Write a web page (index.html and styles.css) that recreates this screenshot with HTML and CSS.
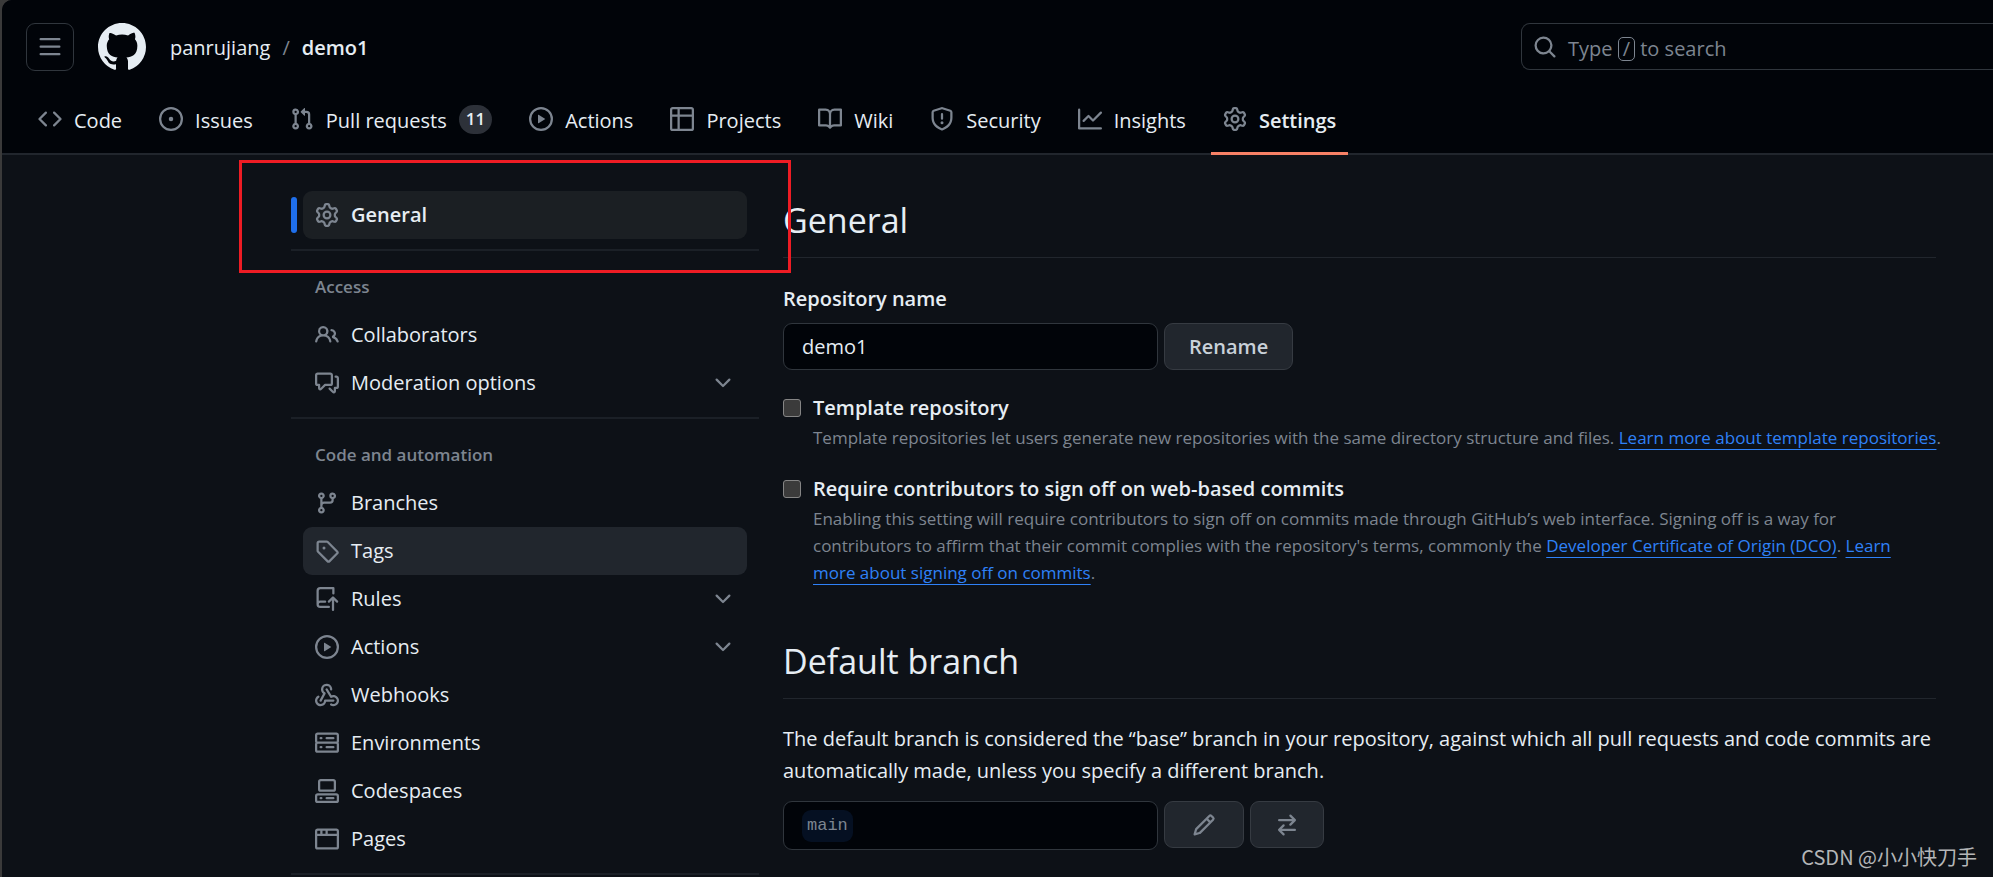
FILE: index.html
```html
<!DOCTYPE html>
<html lang="en">
<head>
<meta charset="utf-8">
<title>Settings · panrujiang/demo1</title>
<link rel="stylesheet" href="styles.css">
</head>
<body>
<svg class="sprite" aria-hidden="true">
  <symbol id="i-bars" viewBox="0 0 16 16"><path d="M1 2.75A.75.75 0 0 1 1.75 2h12.5a.75.75 0 0 1 0 1.5H1.75A.75.75 0 0 1 1 2.75Zm0 5A.75.75 0 0 1 1.75 7h12.5a.75.75 0 0 1 0 1.5H1.75A.75.75 0 0 1 1 7.75ZM1.75 12h12.5a.75.75 0 0 1 0 1.5H1.75a.75.75 0 0 1 0-1.5Z"/></symbol>
  <symbol id="i-mark" viewBox="0 0 16 16"><path d="M8 0c4.42 0 8 3.58 8 8a8.013 8.013 0 0 1-5.45 7.59c-.4.08-.55-.17-.55-.38 0-.27.01-1.13.01-2.2 0-.75-.25-1.23-.54-1.48 1.78-.2 3.65-.88 3.65-3.95 0-.88-.31-1.59-.82-2.15.08-.2.36-1.02-.08-2.12 0 0-.67-.22-2.2.82-.64-.18-1.32-.27-2-.27-.68 0-1.36.09-2 .27-1.53-1.03-2.2-.82-2.2-.82-.44 1.1-.16 1.92-.08 2.12-.51.56-.82 1.28-.82 2.15 0 3.06 1.86 3.75 3.64 3.95-.23.2-.44.55-.51 1.07-.46.21-1.61.55-2.33-.66-.15-.24-.6-.83-1.23-.82-.67.01-.27.38.01.53.34.19.73.9.82 1.13.16.45.68 1.31 2.69.94 0 .67.01 1.3.01 1.49 0 .21-.15.45-.55.38A7.995 7.995 0 0 1 0 8c0-4.42 3.58-8 8-8Z"/></symbol>
  <symbol id="i-search" viewBox="0 0 16 16"><path d="M10.68 11.74a6 6 0 0 1-7.922-8.982 6 6 0 0 1 8.982 7.922l3.04 3.04a.749.749 0 0 1-.326 1.275.749.749 0 0 1-.734-.215ZM11.5 7a4.499 4.499 0 1 0-8.997 0A4.499 4.499 0 0 0 11.5 7Z"/></symbol>
  <symbol id="i-code" viewBox="0 0 16 16"><path d="m11.28 3.22 4.25 4.25a.75.75 0 0 1 0 1.06l-4.25 4.25a.749.749 0 0 1-1.275-.326.749.749 0 0 1 .215-.734L13.94 8l-3.72-3.72a.749.749 0 0 1 .326-1.275.749.749 0 0 1 .734.215Zm-6.56 0a.751.751 0 0 1 1.042.018.751.751 0 0 1 .018 1.042L2.06 8l3.72 3.72a.749.749 0 0 1-.326 1.275.749.749 0 0 1-.734-.215L.47 8.53a.75.75 0 0 1 0-1.06Z"/></symbol>
  <symbol id="i-issue" viewBox="0 0 16 16"><path d="M8 9.5a1.5 1.5 0 1 0 0-3 1.5 1.5 0 0 0 0 3Z"/><path d="M8 0a8 8 0 1 1 0 16A8 8 0 0 1 8 0ZM1.5 8a6.5 6.5 0 1 0 13 0 6.5 6.5 0 0 0-13 0Z"/></symbol>
  <symbol id="i-pull" viewBox="0 0 16 16"><path d="M1.5 3.25a2.25 2.25 0 1 1 3 2.122v5.256a2.251 2.251 0 1 1-1.5 0V5.372A2.25 2.25 0 0 1 1.5 3.25Zm5.677-.177L9.573.677A.25.25 0 0 1 10 .854V2.5h1A2.5 2.5 0 0 1 13.5 5v5.628a2.251 2.251 0 1 1-1.5 0V5a1 1 0 0 0-1-1h-1v1.646a.25.25 0 0 1-.427.177L7.177 3.427a.25.25 0 0 1 0-.354ZM3.75 2.5a.75.75 0 1 0 0 1.5.75.75 0 0 0 0-1.5Zm0 9.5a.75.75 0 1 0 0 1.5.75.75 0 0 0 0-1.5Zm8.25.75a.75.75 0 1 0 1.5 0 .75.75 0 0 0-1.5 0Z"/></symbol>
  <symbol id="i-play" viewBox="0 0 16 16"><path d="M8 0a8 8 0 1 1 0 16A8 8 0 0 1 8 0ZM1.5 8a6.5 6.5 0 1 0 13 0 6.5 6.5 0 0 0-13 0Zm4.879-2.773 4.264 2.559a.25.25 0 0 1 0 .428l-4.264 2.559A.25.25 0 0 1 6 10.559V5.442a.25.25 0 0 1 .379-.215Z"/></symbol>
  <symbol id="i-table" viewBox="0 0 16 16"><path d="M0 1.75C0 .784.784 0 1.75 0h12.5C15.216 0 16 .784 16 1.75v12.5A1.75 1.75 0 0 1 14.25 16H1.75A1.75 1.75 0 0 1 0 14.25ZM6.5 6.5v8h7.75a.25.25 0 0 0 .25-.25V6.5Zm8-1.5V1.75a.25.25 0 0 0-.25-.25H6.5V5Zm-13 1.5v7.75c0 .138.112.25.25.25H5v-8ZM5 5V1.5H1.75a.25.25 0 0 0-.25.25V5Z"/></symbol>
  <symbol id="i-book" viewBox="0 0 16 16"><path d="M0 1.75A.75.75 0 0 1 .75 1h4.253c1.227 0 2.317.59 3 1.501A3.743 3.743 0 0 1 11.006 1h4.245a.75.75 0 0 1 .75.75v10.5a.75.75 0 0 1-.75.75h-4.507a2.25 2.25 0 0 0-1.591.659l-.622.621a.75.75 0 0 1-1.06 0l-.622-.621A2.25 2.25 0 0 0 5.258 13H.75a.75.75 0 0 1-.75-.75Zm7.251 10.324.004-5.073-.002-2.253A2.25 2.25 0 0 0 5.003 2.5H1.5v9h3.757a3.75 3.75 0 0 1 1.994.574ZM8.755 4.75l-.004 7.322a3.752 3.752 0 0 1 1.992-.572H14.5v-9h-3.495a2.25 2.25 0 0 0-2.25 2.25Z"/></symbol>
  <symbol id="i-shield" viewBox="0 0 16 16"><path d="M7.467.133a1.748 1.748 0 0 1 1.066 0l5.25 1.68A1.75 1.75 0 0 1 15 3.48V7c0 1.566-.32 3.182-1.303 4.682-.983 1.498-2.585 2.813-5.032 3.855a1.697 1.697 0 0 1-1.33 0c-2.447-1.042-4.049-2.357-5.032-3.855C1.32 10.182 1 8.566 1 7V3.48a1.755 1.755 0 0 1 1.217-1.667Zm.61 1.429a.25.25 0 0 0-.153 0l-5.25 1.68a.25.25 0 0 0-.174.238V7c0 1.358.275 2.666 1.057 3.86.784 1.194 2.121 2.34 4.366 3.297a.196.196 0 0 0 .154 0c2.245-.956 3.582-2.104 4.366-3.298C13.225 9.666 13.5 8.36 13.5 7V3.48a.251.251 0 0 0-.174-.237l-5.25-1.68ZM8.75 4.75v3a.75.75 0 0 1-1.5 0v-3a.75.75 0 0 1 1.5 0ZM9 10.5a1 1 0 1 1-2 0 1 1 0 0 1 2 0Z"/></symbol>
  <symbol id="i-graph" viewBox="0 0 16 16"><path d="M1.5 1.75V13.5h13.75a.75.75 0 0 1 0 1.5H.75a.75.75 0 0 1-.75-.75V1.75a.75.75 0 0 1 1.5 0Zm14.28 2.53-5.25 5.25a.75.75 0 0 1-1.06 0L7 7.06 4.28 9.78a.751.751 0 0 1-1.042-.018.751.751 0 0 1-.018-1.042l3.25-3.25a.75.75 0 0 1 1.06 0L10 7.94l4.72-4.72a.751.751 0 0 1 1.042.018.751.751 0 0 1 .018 1.042Z"/></symbol>
  <symbol id="i-gear" viewBox="0 0 16 16"><path d="M8 0a8.2 8.2 0 0 1 .701.031C9.444.095 9.99.645 10.16 1.29l.288 1.107c.018.066.079.158.212.224.231.114.454.243.668.386.123.082.233.09.299.071l1.103-.303c.644-.176 1.392.021 1.82.63.27.385.506.792.704 1.218.315.675.111 1.422-.364 1.891l-.814.806c-.049.048-.098.147-.088.294.016.257.016.515 0 .772-.01.147.038.246.088.294l.814.806c.475.469.679 1.216.364 1.891a7.977 7.977 0 0 1-.704 1.217c-.428.61-1.176.807-1.82.63l-1.102-.302c-.067-.019-.177-.011-.3.071a5.909 5.909 0 0 1-.668.386c-.133.066-.194.158-.211.224l-.29 1.106c-.168.646-.715 1.196-1.458 1.26a8.006 8.006 0 0 1-1.402 0c-.743-.064-1.289-.614-1.458-1.26l-.289-1.106c-.018-.066-.079-.158-.212-.224a5.738 5.738 0 0 1-.668-.386c-.123-.082-.233-.09-.299-.071l-1.103.303c-.644.176-1.392-.021-1.82-.63a8.12 8.12 0 0 1-.704-1.218c-.315-.675-.111-1.422.363-1.891l.815-.806c.05-.048.098-.147.088-.294a6.214 6.214 0 0 1 0-.772c.01-.147-.038-.246-.088-.294l-.815-.806C.635 6.045.431 5.298.746 4.623a7.92 7.92 0 0 1 .704-1.217c.428-.61 1.176-.807 1.82-.63l1.102.302c.067.019.177.011.3-.071.214-.143.437-.272.668-.386.133-.066.194-.158.211-.224l.29-1.106C6.009.645 6.556.095 7.299.03 7.53.01 7.764 0 8 0Zm-.571 1.525c-.036.003-.108.036-.137.146l-.289 1.105c-.147.561-.549.967-.998 1.189-.173.086-.34.183-.5.29-.417.278-.97.423-1.529.27l-1.103-.303c-.109-.03-.175.016-.195.045-.22.312-.412.644-.573.99-.014.031-.021.11.059.19l.815.806c.411.406.562.957.53 1.456a4.709 4.709 0 0 0 0 .582c.032.499-.119 1.05-.53 1.456l-.815.806c-.081.08-.073.159-.059.19.162.346.353.677.573.989.02.03.085.076.195.046l1.102-.303c.56-.153 1.113-.008 1.53.27.161.107.328.204.501.29.447.222.85.629.997 1.189l.289 1.105c.029.109.101.143.137.146a6.6 6.6 0 0 0 1.142 0c.036-.003.108-.036.137-.146l.289-1.105c.147-.561.549-.967.998-1.189.173-.086.34-.183.5-.29.417-.278.97-.423 1.529-.27l1.103.303c.109.029.175-.016.195-.045.22-.313.411-.644.573-.99.014-.031.021-.11-.059-.19l-.815-.806c-.411-.406-.562-.957-.53-1.456a4.709 4.709 0 0 0 0-.582c-.032-.499.119-1.05.53-1.456l.815-.806c.081-.08.073-.159.059-.19a6.464 6.464 0 0 0-.573-.989c-.02-.03-.085-.076-.195-.046l-1.102.303c-.56.153-1.113.008-1.53-.27a4.44 4.44 0 0 0-.501-.29c-.447-.222-.85-.629-.997-1.189l-.289-1.105c-.029-.11-.101-.143-.137-.146a6.6 6.6 0 0 0-1.142 0ZM11 8a3 3 0 1 1-6 0 3 3 0 0 1 6 0ZM9.5 8a1.5 1.5 0 1 0-3.001.001A1.5 1.5 0 0 0 9.5 8Z"/></symbol>
  <symbol id="i-people" viewBox="0 0 16 16"><path d="M2 5.5a3.5 3.5 0 1 1 5.898 2.549 5.508 5.508 0 0 1 3.034 4.084.75.75 0 1 1-1.482.235 4 4 0 0 0-7.9 0 .75.75 0 0 1-1.482-.236A5.507 5.507 0 0 1 3.102 8.05 3.493 3.493 0 0 1 2 5.5ZM11 4a3.001 3.001 0 0 1 2.22 5.018 5.01 5.01 0 0 1 2.56 3.012.749.749 0 0 1-.885.954.752.752 0 0 1-.549-.514 3.507 3.507 0 0 0-2.522-2.372.75.75 0 0 1-.574-.73v-.352a.75.75 0 0 1 .416-.672A1.5 1.5 0 0 0 11 5.5.75.75 0 0 1 11 4Zm-5.5-.5a2 2 0 1 0-.001 3.999A2 2 0 0 0 5.5 3.5Z"/></symbol>
  <symbol id="i-comments" viewBox="0 0 16 16"><path d="M1.75 1h8.5c.966 0 1.75.784 1.75 1.75v5.5A1.75 1.75 0 0 1 10.25 10H7.061l-2.574 2.573A1.458 1.458 0 0 1 2 11.543V10h-.25A1.75 1.75 0 0 1 0 8.25v-5.5C0 1.784.784 1 1.75 1ZM1.5 2.75v5.5c0 .138.112.25.25.25h1a.75.75 0 0 1 .75.75v2.19l2.72-2.72a.749.749 0 0 1 .53-.22h3.5a.25.25 0 0 0 .25-.25v-5.5a.25.25 0 0 0-.25-.25h-8.5a.25.25 0 0 0-.25.25Zm13 2a.25.25 0 0 0-.25-.25h-.5a.75.75 0 0 1 0-1.5h.5c.966 0 1.75.784 1.75 1.75v5.5A1.75 1.75 0 0 1 14.25 12H14v1.543a1.458 1.458 0 0 1-2.487 1.03L9.22 12.28a.749.749 0 0 1 .326-1.275.749.749 0 0 1 .734.215l2.22 2.22v-2.19a.75.75 0 0 1 .75-.75h1a.25.25 0 0 0 .25-.25Z"/></symbol>
  <symbol id="i-branch" viewBox="0 0 16 16"><path d="M9.5 3.25a2.25 2.25 0 1 1 3 2.122V6A2.5 2.5 0 0 1 10 8.5H6a1 1 0 0 0-1 1v1.128a2.251 2.251 0 1 1-1.5 0V5.372a2.25 2.25 0 1 1 1.5 0v1.836A2.493 2.493 0 0 1 6 7h4a1 1 0 0 0 1-1v-.628A2.25 2.25 0 0 1 9.5 3.25Zm-6 0a.75.75 0 1 0 1.5 0 .75.75 0 0 0-1.5 0Zm8.25-.75a.75.75 0 1 0 0 1.5.75.75 0 0 0 0-1.5ZM4.25 12a.75.75 0 1 0 0 1.5.75.75 0 0 0 0-1.5Z"/></symbol>
  <symbol id="i-tag" viewBox="0 0 16 16"><path d="M1 7.775V2.75C1 1.784 1.784 1 2.75 1h5.025c.464 0 .91.184 1.238.513l6.25 6.25a1.75 1.75 0 0 1 0 2.474l-5.026 5.026a1.75 1.75 0 0 1-2.474 0l-6.25-6.25A1.752 1.752 0 0 1 1 7.775Zm1.5 0c0 .066.026.13.073.177l6.25 6.25a.25.25 0 0 0 .354 0l5.025-5.025a.25.25 0 0 0 0-.354l-6.25-6.25a.25.25 0 0 0-.177-.073H2.75a.25.25 0 0 0-.25.25ZM6 5a1 1 0 1 1 0 2 1 1 0 0 1 0-2Z"/></symbol>
  <symbol id="i-push" viewBox="0 0 16 16"><path d="M1 2.5A2.5 2.5 0 0 1 3.5 0h8.75a.75.75 0 0 1 .75.75v3.5a.75.75 0 0 1-1.5 0V1.5h-8a1 1 0 0 0-1 1v6.708A2.493 2.493 0 0 1 3.5 9h3.25a.75.75 0 0 1 0 1.5H3.5a1 1 0 0 0 0 2h5.75a.75.75 0 0 1 0 1.5H3.5A2.5 2.5 0 0 1 1 11.5Zm13.23 7.79-1.48-1.48v6.44a.75.75 0 0 1-1.5 0V8.81L9.77 10.29a.751.751 0 0 1-1.042-.018.751.751 0 0 1-.018-1.042l2.75-2.75a.75.75 0 0 1 1.06 0l2.77 2.75a.751.751 0 0 1-.018 1.042.751.751 0 0 1-1.042.018Z"/></symbol>
  <symbol id="i-webhook" viewBox="0 0 16 16"><path d="M5.5 4.25a2.25 2.25 0 0 1 4.5 0 .75.75 0 0 0 1.5 0 3.75 3.75 0 1 0-6.14 2.889l-2.272 4.258a.75.75 0 0 0 1.324.706L7 7.25a.75.75 0 0 0-.309-1.015A2.25 2.25 0 0 1 5.5 4.25Z"/><path d="M7.364 3.607a.75.75 0 0 1 1.03.257l2.608 4.349a3.75 3.75 0 1 1-.628 6.785.75.75 0 0 1 .752-1.299 2.25 2.25 0 1 0-.033-3.88.75.75 0 0 1-1.03-.256L7.107 4.636a.75.75 0 0 1 .257-1.03Z"/><path d="M2.9 8.776A.75.75 0 0 1 2.625 9.8 2.25 2.25 0 1 0 6 11.75a.75.75 0 0 1 .75-.751h5.5a.75.75 0 0 1 0 1.5H7.425a3.751 3.751 0 1 1-5.55-3.998.75.75 0 0 1 1.024.274Z"/></symbol>
  <symbol id="i-server" viewBox="0 0 16 16"><path d="M1.75 1h12.5c.966 0 1.75.784 1.75 1.75v4c0 .372-.116.717-.314 1 .198.283.314.628.314 1v4a1.75 1.75 0 0 1-1.75 1.75H1.75A1.75 1.75 0 0 1 0 12.75v-4c0-.358.109-.707.314-1a1.739 1.739 0 0 1-.314-1v-4C0 1.784.784 1 1.75 1ZM1.5 2.75v4c0 .138.112.25.25.25h12.5a.25.25 0 0 0 .25-.25v-4a.25.25 0 0 0-.25-.25H1.75a.25.25 0 0 0-.25.25Zm.25 5.75a.25.25 0 0 0-.25.25v4c0 .138.112.25.25.25h12.5a.25.25 0 0 0 .25-.25v-4a.25.25 0 0 0-.25-.25ZM7 4.75A.75.75 0 0 1 7.75 4h4.5a.75.75 0 0 1 0 1.5h-4.5A.75.75 0 0 1 7 4.75ZM7.75 10h4.5a.75.75 0 0 1 0 1.5h-4.5a.75.75 0 0 1 0-1.5ZM3 4.75A.75.75 0 0 1 3.75 4h.5a.75.75 0 0 1 0 1.5h-.5A.75.75 0 0 1 3 4.75ZM3.75 10h.5a.75.75 0 0 1 0 1.5h-.5a.75.75 0 0 1 0-1.5Z"/></symbol>
  <symbol id="i-codespaces" viewBox="0 0 16 16"><path d="M0 11.25c0-.966.784-1.75 1.75-1.75h12.5c.966 0 1.75.784 1.75 1.75v3A1.75 1.75 0 0 1 14.25 16H1.75A1.75 1.75 0 0 1 0 14.25Zm2-9.5C2 .784 2.784 0 3.75 0h8.5C13.216 0 14 .784 14 1.75v5a1.75 1.75 0 0 1-1.75 1.75h-8.5A1.75 1.75 0 0 1 2 6.75Zm1.75-.25a.25.25 0 0 0-.25.25v5c0 .138.112.25.25.25h8.5a.25.25 0 0 0 .25-.25v-5a.25.25 0 0 0-.25-.25Zm-2 9.5a.25.25 0 0 0-.25.25v3c0 .138.112.25.25.25h12.5a.25.25 0 0 0 .25-.25v-3a.25.25 0 0 0-.25-.25Z"/><path d="M7 12.75a.75.75 0 0 1 .75-.75h4.5a.75.75 0 0 1 0 1.5h-4.5a.75.75 0 0 1-.75-.75Zm-4 0a.75.75 0 0 1 .75-.75h.5a.75.75 0 0 1 0 1.5h-.5a.75.75 0 0 1-.75-.75Z"/></symbol>
  <symbol id="i-browser" viewBox="0 0 16 16"><path d="M0 2.75C0 1.784.784 1 1.75 1h12.5c.966 0 1.75.784 1.75 1.75v10.5A1.75 1.75 0 0 1 14.25 15H1.75A1.75 1.75 0 0 1 0 13.25ZM14.5 6h-13v7.25c0 .138.112.25.25.25h12.5a.25.25 0 0 0 .25-.25Zm-6-3.5v2h6V2.75a.25.25 0 0 0-.25-.25ZM5 2.5v2h2v-2Zm-3.25 0a.25.25 0 0 0-.25.25V4.5h2v-2Z"/></symbol>
  <symbol id="i-chevron" viewBox="0 0 16 16"><path d="M12.78 5.22a.749.749 0 0 1 0 1.06l-4.25 4.25a.749.749 0 0 1-1.06 0L3.22 6.28a.749.749 0 1 1 1.06-1.06L8 8.939l3.72-3.719a.749.749 0 0 1 1.06 0Z"/></symbol>
  <symbol id="i-pencil" viewBox="0 0 16 16"><path d="M11.013 1.427a1.75 1.75 0 0 1 2.474 0l1.086 1.086a1.75 1.75 0 0 1 0 2.474l-8.61 8.61c-.21.21-.47.364-.756.445l-3.251.93a.75.75 0 0 1-.927-.928l.929-3.25c.081-.286.235-.547.445-.758l8.61-8.61Zm.176 4.823L9.75 4.81l-6.286 6.287a.253.253 0 0 0-.064.108l-.558 1.953 1.953-.558a.253.253 0 0 0 .108-.064Zm1.238-3.763a.25.25 0 0 0-.354 0L10.811 3.75l1.439 1.44 1.263-1.263a.25.25 0 0 0 0-.354Z"/></symbol>
  <symbol id="i-swap" viewBox="0 0 16 16"><path d="M5.22 14.78a.75.75 0 0 0 1.06-1.06L4.56 12h8.69a.75.75 0 0 0 0-1.5H4.56l1.72-1.72a.75.75 0 0 0-1.06-1.06l-3 3a.75.75 0 0 0 0 1.06l3 3Zm5.56-6.5a.75.75 0 1 1-1.06-1.06l1.72-1.72H2.75a.75.75 0 0 1 0-1.5h8.69L9.72 2.28a.75.75 0 0 1 1.06-1.06l3 3a.75.75 0 0 1 0 1.06l-3 3Z"/></symbol>
</svg>

<div class="app">
  <header class="header">
    <div class="topbar">
      <button class="menu-button" type="button" aria-label="Open menu"><svg class="icon"><use href="#i-bars"/></svg></button>
      <a class="logo" href="#" aria-label="Homepage"><svg class="mark"><use href="#i-mark"/></svg></a>
      <nav class="crumbs" aria-label="Breadcrumb">
        <a href="#">panrujiang</a><span class="slash">/</span><a class="current" href="#">demo1</a>
      </nav>
      <button class="search" type="button"><svg class="icon"><use href="#i-search"/></svg><span class="search-text">Type <kbd>/</kbd> to search</span></button>
    </div>
    <nav class="tabs" aria-label="Repository">
      <a class="tab" href="#"><svg class="icon"><use href="#i-code"/></svg>Code</a>
      <a class="tab" href="#"><svg class="icon"><use href="#i-issue"/></svg>Issues</a>
      <a class="tab" href="#"><svg class="icon"><use href="#i-pull"/></svg>Pull requests<span class="count">11</span></a>
      <a class="tab" href="#"><svg class="icon"><use href="#i-play"/></svg>Actions</a>
      <a class="tab" href="#"><svg class="icon"><use href="#i-table"/></svg>Projects</a>
      <a class="tab" href="#"><svg class="icon"><use href="#i-book"/></svg>Wiki</a>
      <a class="tab" href="#"><svg class="icon"><use href="#i-shield"/></svg>Security</a>
      <a class="tab" href="#"><svg class="icon"><use href="#i-graph"/></svg>Insights</a>
      <a class="tab selected" href="#" aria-current="page"><svg class="icon"><use href="#i-gear"/></svg>Settings</a>
    </nav>
  </header>

  <div class="layout">
    <nav class="sidebar" aria-label="Settings">
      <div class="group">
        <a class="item active" href="#" aria-current="page"><svg class="icon"><use href="#i-gear"/></svg>General</a>
      </div>
      <div class="group">
        <h2 class="group-title">Access</h2>
        <a class="item" href="#"><svg class="icon"><use href="#i-people"/></svg>Collaborators</a>
        <button class="item" type="button"><svg class="icon"><use href="#i-comments"/></svg>Moderation options<svg class="icon chevron"><use href="#i-chevron"/></svg></button>
      </div>
      <div class="group">
        <h2 class="group-title">Code and automation</h2>
        <a class="item" href="#"><svg class="icon"><use href="#i-branch"/></svg>Branches</a>
        <a class="item hovered" href="#"><svg class="icon"><use href="#i-tag"/></svg>Tags</a>
        <button class="item" type="button"><svg class="icon"><use href="#i-push"/></svg>Rules<svg class="icon chevron"><use href="#i-chevron"/></svg></button>
        <button class="item" type="button"><svg class="icon"><use href="#i-play"/></svg>Actions<svg class="icon chevron"><use href="#i-chevron"/></svg></button>
        <a class="item" href="#"><svg class="icon"><use href="#i-webhook"/></svg>Webhooks</a>
        <a class="item" href="#"><svg class="icon"><use href="#i-server"/></svg>Environments</a>
        <a class="item" href="#"><svg class="icon"><use href="#i-codespaces"/></svg>Codespaces</a>
        <a class="item" href="#"><svg class="icon"><use href="#i-browser"/></svg>Pages</a>
      </div>
      <div class="group"></div>
    </nav>

    <main class="content">
      <h1 class="heading">General</h1>
      <form class="rename">
        <label class="field-label" for="repo-name">Repository name</label>
        <div class="row">
          <input class="text-input" id="repo-name" type="text" value="demo1">
          <button class="button" type="button">Rename</button>
        </div>
      </form>
      <div class="option">
        <input class="check" id="template" type="checkbox">
        <div class="option-body">
          <label class="option-label" for="template">Template repository</label>
          <p class="note single-line">Template repositories let users generate new repositories with the same directory structure and files. <a href="#">Learn more about template repositories</a>.</p>
        </div>
      </div>
      <div class="option">
        <input class="check" id="signoff" type="checkbox">
        <div class="option-body">
          <label class="option-label" for="signoff">Require contributors to sign off on web-based commits</label>
          <p class="note">Enabling this setting will require contributors to sign off on commits made through GitHub’s web interface. Signing off is a way for contributors to affirm that their commit complies with the repository's terms, commonly the <a href="#">Developer Certificate of Origin (DCO)</a>. <a href="#">Learn more about signing off on commits</a>.</p>
        </div>
      </div>
      <h2 class="heading">Default branch</h2>
      <p class="lead">The default branch is considered the “base” branch in your repository, against which all pull requests and code commits are automatically made, unless you specify a different branch.</p>
      <div class="row">
        <div class="branch-box"><code class="branch">main</code></div>
        <button class="button edit" type="button" aria-label="Rename branch"><svg class="icon"><use href="#i-pencil"/></svg></button>
        <button class="button" type="button" aria-label="Switch branch"><svg class="icon"><use href="#i-swap"/></svg></button>
      </div>
    </main>
    <div class="highlight"></div>
  </div>
  <div class="watermark">CSDN @小小快刀手</div>
</div>
</body>
</html>
```

FILE: styles.css
```css
* { box-sizing: border-box; }

body {
  margin: 0;
  padding-left: 2px;
  background: #3a3a3a;
  color: #e6edf3;
  font-family: "Open Sans", "Noto Sans CJK SC", sans-serif;
  font-size: 20px;
  line-height: 32px;
}

a { color: inherit; text-decoration: none; }
button, input { font: inherit; color: inherit; }
h1, h2, p { margin: 0; }

.sprite { display: none; }
.icon { width: 24px; height: 24px; flex: none; fill: #7d8590; }

.app {
  position: relative;
  min-height: 100vh;
  overflow: hidden;
  background: #0d1117;
  border-top-left-radius: 10px;
}

.header {
  background: #010409;
  box-shadow: inset 0 -2px #21262d;
}

.topbar {
  display: flex;
  align-items: flex-start;
  height: 71px;
  padding: 23px 0 0 24px;
}

.menu-button {
  display: grid;
  place-items: center;
  width: 48px;
  height: 48px;
  padding: 0;
  background: none;
  border: 1px solid #30363d;
  border-radius: 9px;
}

.logo { margin: 0 24px; height: 48px; }
.mark { width: 48px; height: 48px; fill: #e6edf3; }

.crumbs { display: flex; gap: 12px; line-height: 50px; }
.slash { color: #7d8590; }
.current { font-weight: 600; }

.search {
  display: flex;
  align-items: center;
  gap: 11px;
  width: 472px;
  height: 47px;
  margin-left: auto;
  padding: 0 11px;
  background: none;
  border: 1px solid #30363d;
  border-right: 0;
  border-radius: 9px 0 0 9px;
  color: #7d8590;
}
.search-text { padding-top: 4px; }
.search kbd {
  display: inline-block;
  padding: 0 4px;
  border: 1px solid #7d8590;
  border-radius: 5px;
  font: inherit;
  line-height: 22px;
}

.tabs {
  display: flex;
  gap: 13px;
  padding: 12px 24px 0;
}
.tab {
  display: flex;
  align-items: flex-start;
  gap: 12px;
  height: 72px;
  padding: 22px 12px 0;
}
.tab .icon { margin-top: 2px; }
.tab.selected { font-weight: 600; box-shadow: inset 0 -3px #f78166; }
.count {
  height: 29px;
  padding: 0 7px;
  background: #2d3139;
  border-radius: 15px;
  font-size: 17px;
  font-weight: 600;
  line-height: 28px;
}

.layout {
  position: relative;
  display: flex;
  gap: 24px;
  padding: 36px 57px 0 289px;
}

.sidebar { flex: none; width: 468px; }
.group + .group { margin-top: 10px; border-top: 2px solid #1b2027; }
.group-title {
  padding: 24px 24px 12px;
  color: #7d8590;
  font-size: 17px;
  font-weight: 600;
  line-height: 24px;
}
.item {
  position: relative;
  display: flex;
  align-items: center;
  gap: 12px;
  width: 444px;
  height: 48px;
  margin: 0 12px;
  padding: 0 12px;
  background: none;
  border: 0;
  border-radius: 9px;
  text-align: left;
}
.item.active { background: #1b1f23; font-weight: 600; }
.item.active::before {
  content: "";
  position: absolute;
  left: -12px;
  top: 6px;
  width: 6px;
  height: 36px;
  background: #1f6feb;
  border-radius: 9px;
}
.item.hovered { background: #21262d; }
.chevron { margin-left: auto; }

.content { flex: 1; min-width: 0; }
.heading {
  padding: 5px 0 12px;
  border-bottom: 1px solid #21262d;
  font-size: 34px;
  font-weight: 400;
  line-height: 49px;
}
.field-label { display: block; margin-top: 25px; font-weight: 600; }
.row { display: flex; gap: 6px; margin-top: 8px; }
.text-input, .branch-box {
  width: 375px;
  height: 47px;
  padding: 0 18px;
  background: #010409;
  border: 1px solid #30363d;
  border-radius: 9px;
}
.branch-box { display: flex; align-items: center; height: 49px; }
.button {
  display: grid;
  place-items: center;
  height: 47px;
  padding: 0 24px;
  background: #21262d;
  border: 1px solid #363b42;
  border-radius: 9px;
  color: #c9d1d9;
  font-weight: 600;
}
.edit { padding: 0 27px; }

.option { display: flex; gap: 12px; margin-top: 22px; }
.option-body { flex: 1; min-width: 0; }
.check {
  appearance: none;
  flex: none;
  width: 18px;
  height: 18px;
  margin: 7px 0 0;
  background: #3b3b3b;
  border: 1px solid #858585;
  border-radius: 3px;
}
.option-label { display: block; font-weight: 600; }
.note { color: #7d8590; font-size: 17px; line-height: 27px; }
.note a { color: #2f81f7; text-decoration: underline; text-underline-offset: 5px; text-decoration-thickness: 1px; }
.single-line { white-space: nowrap; }
.option + .heading { margin-top: 46px; }
.lead { padding: 24px 0 6px; }

.branch {
  padding: 0 5px;
  background: #051022;
  border-radius: 9px;
  color: #7d8590;
  font-family: "Liberation Mono", monospace;
  font-size: 17px;
  line-height: 32px;
}

.highlight {
  position: absolute;
  left: 237px;
  top: 5px;
  width: 552px;
  height: 113px;
  border: 3px solid #ed1c24;
}
.watermark {
  position: absolute;
  right: 16px;
  bottom: 4px;
  color: #b4b6b8;
  font-family: "Noto Sans CJK SC", sans-serif;
  font-size: 20px;
}
```
